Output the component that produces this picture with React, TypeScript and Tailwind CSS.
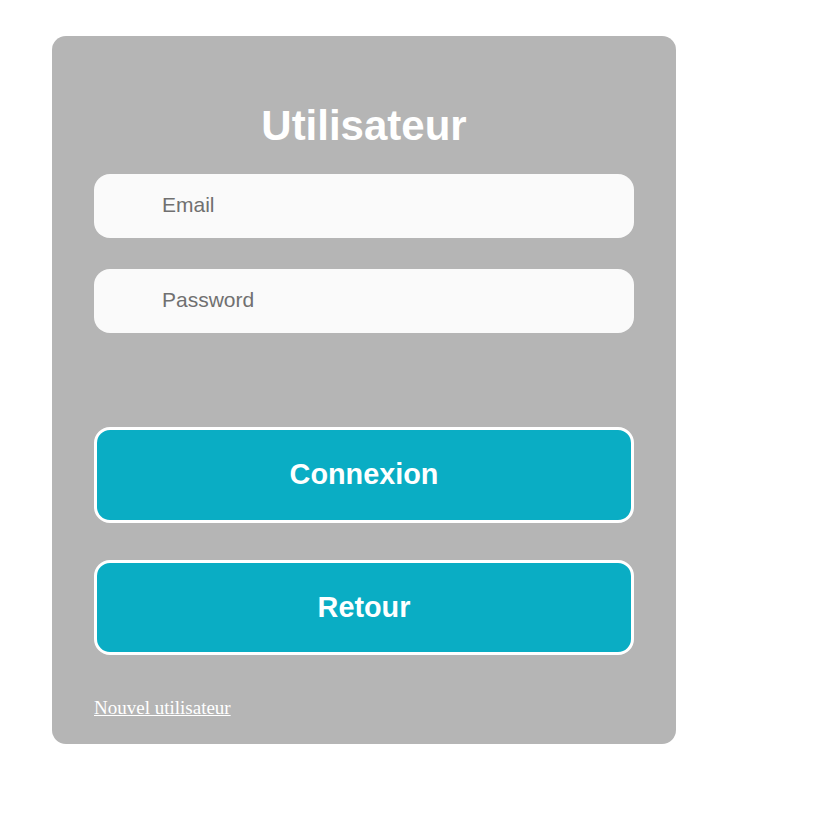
export default function App() {
  return (
    <div className="min-h-[837px] bg-white pt-[36px] pl-[52px]" style={{ fontFamily: '"Liberation Sans", Arial, sans-serif' }}>
      <div className="flex w-[624px] h-[708px] flex-col rounded-[14px] bg-[#b5b5b5] px-[42px]">
        <h1 className="mt-[62px] h-[56px] text-center text-[42px] font-bold leading-[56px] text-white">
          Utilisateur
        </h1>
        <input
          type="email"
          placeholder="Email"
          className="mt-[20px] h-[64px] w-full rounded-[16px] bg-[#fafafa] pl-[68px] pb-[2px] text-[21px] text-[#333] outline-none placeholder:text-[#707070]"
        />
        <input
          type="password"
          placeholder="Password"
          className="mt-[31px] h-[64px] w-full rounded-[16px] bg-[#fafafa] pl-[68px] pb-[2px] text-[21px] text-[#333] outline-none placeholder:text-[#707070]"
        />
        <button className="mt-[94px] h-[96px] w-full rounded-[16px] border-[3px] border-white bg-[#0aadc4] text-[28.8px] font-bold text-white">
          Connexion
        </button>
        <button className="mt-[37px] h-[95px] w-full rounded-[16px] border-[3px] border-white bg-[#0aadc4] text-[28.8px] font-bold text-white">
          Retour
        </button>
        <a
          href="#"
          className="mt-[41px] self-start text-[19px] leading-[24px] text-white underline"
          style={{ fontFamily: '"Liberation Serif", "Times New Roman", serif' }}
        >
          Nouvel utilisateur
        </a>
      </div>
    </div>
  );
}
